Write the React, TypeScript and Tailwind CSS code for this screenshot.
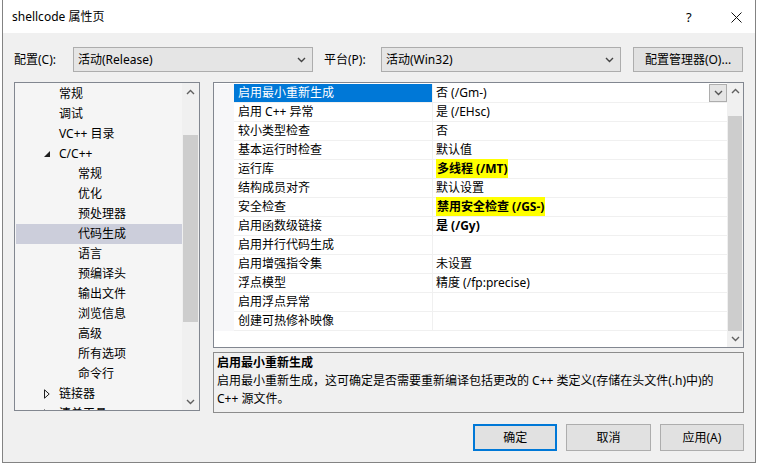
import React from "react";

const FONT = "font-['Noto_Sans','Noto_Sans_CJK_SC',sans-serif]";

type TreeItem = { label: string; level: 1 | 2; expand?: "open" | "closed"; selected?: boolean };

const treeItems: TreeItem[] = [
  { label: "常规", level: 1 },
  { label: "调试", level: 1 },
  { label: "VC++ 目录", level: 1 },
  { label: "C/C++", level: 1, expand: "open" },
  { label: "常规", level: 2 },
  { label: "优化", level: 2 },
  { label: "预处理器", level: 2 },
  { label: "代码生成", level: 2, selected: true },
  { label: "语言", level: 2 },
  { label: "预编译头", level: 2 },
  { label: "输出文件", level: 2 },
  { label: "浏览信息", level: 2 },
  { label: "高级", level: 2 },
  { label: "所有选项", level: 2 },
  { label: "命令行", level: 2 },
  { label: "链接器", level: 1, expand: "closed" },
  { label: "清单工具", level: 1, expand: "closed" },
];

type Prop = { name: string; value: string; bold?: boolean; mark?: boolean };

const props: Prop[] = [
  { name: "启用最小重新生成", value: "否 (/Gm-)" },
  { name: "启用 C++ 异常", value: "是 (/EHsc)" },
  { name: "较小类型检查", value: "否" },
  { name: "基本运行时检查", value: "默认值" },
  { name: "运行库", value: "多线程 (/MT)", bold: true, mark: true },
  { name: "结构成员对齐", value: "默认设置" },
  { name: "安全检查", value: "禁用安全检查 (/GS-)", bold: true, mark: true },
  { name: "启用函数级链接", value: "是 (/Gy)", bold: true },
  { name: "启用并行代码生成", value: "" },
  { name: "启用增强指令集", value: "未设置" },
  { name: "浮点模型", value: "精度 (/fp:precise)" },
  { name: "启用浮点异常", value: "" },
  { name: "创建可热修补映像", value: "" },
];

function Chevron({ up = false, color = "#606060" }: { up?: boolean; color?: string }) {
  return (
    <svg width="9" height="6" viewBox="0 0 9 6">
      <path d={up ? "M1 5 L4.5 1.5 L8 5" : "M1 1 L4.5 4.5 L8 1"} fill="none" stroke={color} strokeWidth="1.4" />
    </svg>
  );
}

function Combo({ text, width }: { text: string; width: string }) {
  return (
    <div className={`${width} h-[25px] bg-[#e5e5e5] border border-[#adadad] flex items-center justify-between pl-[4px] pr-[6px]`}>
      <span>{text}</span>
      <Chevron color="#444" />
    </div>
  );
}

function ScrollBar({ width, thumbTop, thumbHeight }: { width: string; thumbTop: string; thumbHeight: string }) {
  return (
    <div className={`${width} h-full bg-[#f0f0f0] flex flex-col`}>
      <div className="h-[17px] flex items-center justify-center">
        <Chevron up />
      </div>
      <div className="flex-1 px-[1px]">
        <div className={`${thumbTop} ${thumbHeight} bg-[#cdcdcd]`}></div>
      </div>
      <div className="h-[17px] flex items-center justify-center">
        <Chevron />
      </div>
    </div>
  );
}

function Tree() {
  return (
    <div className="w-[186px] h-[329px] border border-[#828790] bg-[#f5f5f5] flex">
      <div className="w-[167px] pl-[1px] pt-[1px] overflow-hidden">
        {treeItems.map((t, i) => (
          <div key={i} className={`h-[20px] w-[166px] flex items-center relative ${t.selected ? "bg-[#cccedb]" : ""}`}>
            {t.expand === "open" && (
              <svg className="absolute left-[28px] top-[7px]" width="6" height="6" viewBox="0 0 6 6">
                <path d="M6 0 L6 6 L0 6 Z" fill="#1e1e1e" />
              </svg>
            )}
            {t.expand === "closed" && (
              <svg className="absolute left-[28px] top-[5px]" width="6" height="10" viewBox="0 0 6 10">
                <path d="M0.5 0.8 L5.2 5 L0.5 9.2 Z" fill="none" stroke="#1e1e1e" strokeWidth="1" />
              </svg>
            )}
            <span className={t.level === 1 ? "pl-[43px]" : "pl-[62px]"}>{t.label}</span>
          </div>
        ))}
      </div>
      <ScrollBar width="w-[17px]" thumbTop="mt-[35px]" thumbHeight="h-[187px]" />
    </div>
  );
}

function Grid() {
  return (
    <div className="w-[531px] h-[266px] border border-[#828790] bg-white flex">
      <div className="w-[513px] pt-[1px]">
        {props.map((p, i) => (
          <div key={i} className="h-[19px] flex">
            <div className="w-[20px] bg-[#f7f7f9]"></div>
            <div
              className={`w-[199px] h-full border-b border-r border-[#f0f0f0] pl-[4px] leading-[18px] ${
                i === 0 ? "bg-[#0078d7] text-white border-[#0078d7]" : ""
              }`}
            >
              {p.name}
            </div>
            <div className="flex-1 h-full border-b border-[#f0f0f0] pl-[3px] leading-[18px] flex justify-between">
              <span className={p.bold ? "font-bold" : ""}>
                {p.mark ? <span className="bg-[#ffff00] px-[1px] py-[1px]">{p.value}</span> : p.value}
              </span>
              {i === 0 && (
                <div className="w-[18px] h-[18px] bg-[#e5e5e5] border border-[#adadad] flex items-center justify-center">
                  <Chevron color="#555" />
                </div>
              )}
            </div>
          </div>
        ))}
      </div>
      <ScrollBar width="w-[16px]" thumbTop="mt-[16px]" thumbHeight="h-[215px]" />
    </div>
  );
}

function Btn({ text, primary = false }: { text: string; primary?: boolean }) {
  return (
    <div
      className={`w-[86px] h-[27px] bg-[#e1e1e1] flex items-center justify-center ${
        primary ? "border-2 border-[#0078d7]" : "border border-[#adadad]"
      }`}
    >
      {text}
    </div>
  );
}

export default function App() {
  return (
    <div className={`w-[760px] h-[466px] bg-white text-[12px] text-black ${FONT}`}>
      <div className="ml-[2px] w-[754px] h-[463px] border-x border-b border-[#838383] flex flex-col">
        <div className="h-[33px] bg-white flex items-center pl-[9px] relative">
          <span className="text-[12px]">shellcode 属性页</span>
          <span className="absolute left-[683px] top-[8px] text-[13px]">?</span>
          <svg className="absolute left-[728px] top-[12px]" width="11" height="11" viewBox="0 0 11 11">
            <path d="M0.5 0.5 L10.5 10.5 M10.5 0.5 L0.5 10.5" stroke="#111" strokeWidth="1" />
          </svg>
        </div>

        <div className="flex-1 bg-[#f0f0f0] px-[11px] flex flex-col">
          <div className="mt-[14px] h-[25px] flex items-center">
            <span className="w-[59px]">配置(C):</span>
            <Combo text="活动(Release)" width="w-[240px]" />
            <span className="w-[68px] pl-[11px]">平台(P):</span>
            <Combo text="活动(Win32)" width="w-[240px]" />
            <div className="ml-[12px] w-[110px] h-[25px] bg-[#e1e1e1] border border-[#adadad] flex items-center justify-center">
              配置管理器(O)...
            </div>
          </div>

          <div className="mt-[10px] flex gap-[13px]">
            <Tree />
            <div className="flex flex-col">
              <Grid />
              <div className="mt-[4px] w-[531px] h-[61px] border border-[#8c8c8c] bg-[#f0f0f0] pl-[3px] pt-[1px] leading-[18px]">
                <div className="font-bold">启用最小重新生成</div>
                <div>启用最小重新生成，这可确定是否需要重新编译包括更改的 C++ 类定义(存储在头文件(.h)中)的</div>
                <div>C++ 源文件。</div>
              </div>
            </div>
          </div>

          <div className="mt-[11px] pl-[459px] flex gap-[9px]">
            <Btn text="确定" primary />
            <Btn text="取消" />
            <Btn text="应用(A)" />
          </div>
        </div>
      </div>
    </div>
  );
}
